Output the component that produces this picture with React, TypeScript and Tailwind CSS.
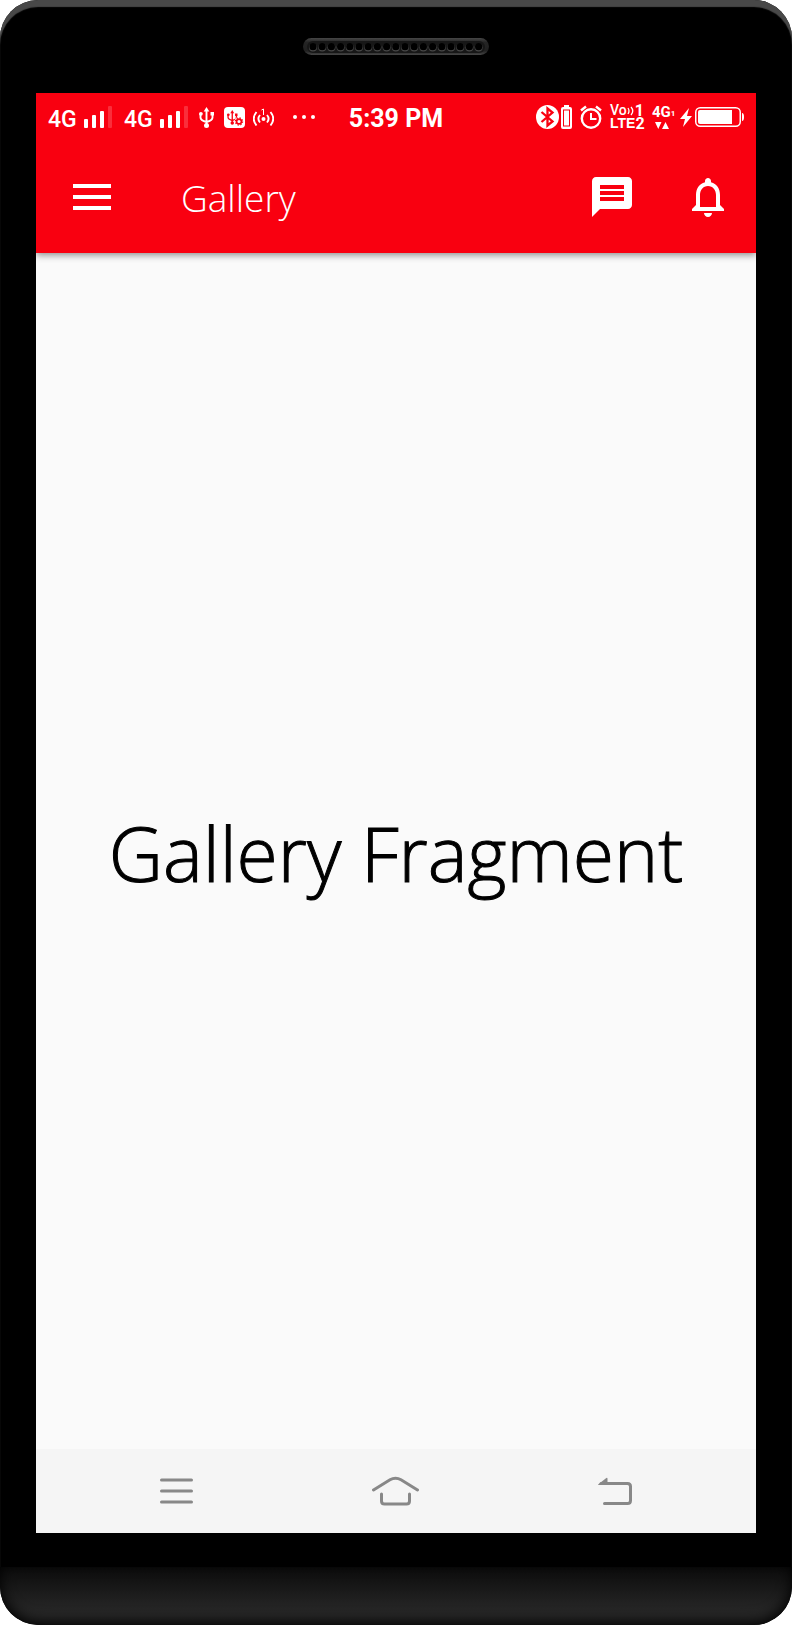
import { MdMessage, MdNotificationsNone } from "react-icons/md";

function SignalStrength() {
  return (
    <div className="flex items-end gap-2">
      <span className="h-[18px] w-7 text-[23px] leading-[20px] font-medium">4G</span>
      <svg width="28" height="22" viewBox="0 0 28 22" fill="#fff" aria-hidden="true">
        <rect x="0" y="13" width="4" height="9" rx="1" />
        <rect x="8" y="9" width="4" height="13" rx="1" />
        <rect x="16" y="5" width="4" height="17" rx="1" />
        <rect x="24" y="0" width="4" height="22" rx="1" opacity="0.18" />
      </svg>
    </div>
  );
}

function UsbPaths() {
  return (
    <>
      <path d="M7.500 3v15M1.500 7v3.500q0 3 6 4.500 6-1.500 6-4.500V7" fill="none" stroke="currentColor" strokeWidth="1.900" />
      <path d="M7.500 0l2.800 4.500H4.700z" fill="currentColor" />
      <circle cx="7.500" cy="18.500" r="2.500" fill="currentColor" />
      <circle cx="1.900" cy="6.800" r="1.900" fill="currentColor" />
      <rect x="11.500" y="5" width="3.500" height="3.500" fill="currentColor" />
    </>
  );
}

function StatusBar() {
  return (
    <div className="grid h-12 grid-cols-[1fr_auto_1fr] items-center px-3">
      <div className="flex items-center">
        <div className="flex gap-3">
          <SignalStrength />
          <SignalStrength />
        </div>
        <svg className="ml-[11px]" width="15" height="21" viewBox="0 0 15 21" aria-hidden="true">
          <UsbPaths />
        </svg>
        <svg className="ml-[10px]" width="21" height="21" viewBox="0 0 21 21" aria-hidden="true">
          <rect width="21" height="21" rx="4" fill="#fff" />
          <g className="text-[#f90010]" transform="translate(3 3) scale(.7)">
            <UsbPaths />
          </g>
          <circle cx="15" cy="14.500" r="4.600" fill="#fff" />
          <circle cx="15" cy="14.500" r="2.400" fill="none" stroke="#f90010" strokeWidth="1.600" />
          <circle cx="15" cy="14.500" r="3.600" fill="none" stroke="#f90010" strokeWidth="1.200" strokeDasharray="1.400 1.430" />
        </svg>
        <svg className="ml-2" width="21" height="21" viewBox="0 0 21 21" fill="none" stroke="#fff" strokeWidth="1.900" aria-hidden="true">
          <path d="M3.500 5q-5.500 6.700 0 13.500M7 8q-3.200 3.800 0 7.500M17.500 5q5.500 6.700 0 13.500M14 8q3.200 3.800 0 7.500" />
          <circle cx="10.500" cy="12" r="2" fill="#fff" stroke="none" />
          <path d="M8.500 3l2-1v6" strokeWidth="1" />
        </svg>
        <svg className="ml-[19px]" width="22" height="4" viewBox="0 0 22 4" fill="#fff" aria-hidden="true">
          <circle cx="2" cy="2" r="2" />
          <circle cx="11" cy="2" r="2" />
          <circle cx="20" cy="2" r="2" />
        </svg>
      </div>

      <time className="pt-1 text-[25px] leading-6 font-bold">5:39 PM</time>

      <div className="flex items-center justify-end gap-2">
        <div className="flex gap-0.5">
          <svg width="23" height="24" viewBox="0 0 23 24" aria-hidden="true">
            <ellipse cx="11.500" cy="12" rx="11.500" ry="12" fill="#fff" />
            <path d="M5.500 7l11 9.500-5 4V3.500l5 4-11 9.500" fill="none" stroke="#f90010" strokeWidth="2.300" />
          </svg>
          <svg width="11" height="24" viewBox="0 0 11 24" aria-hidden="true">
            <path d="M3 0h5v2h1q2 0 2 2v18q0 2-2 2H2q-2 0-2-2V4q0-2 2-2h1z" fill="#fff" />
            <rect x="2.500" y="5" width="6" height="16" fill="#fff" stroke="#f90010" />
          </svg>
        </div>
        <svg width="22" height="24" viewBox="0 0 22 24" fill="none" stroke="#fff" strokeWidth="2.400" aria-hidden="true">
          <circle cx="11" cy="13.500" r="9.200" />
          <path d="M11 8v6h5.500" strokeWidth="2" />
          <path d="M1 5.500L6 1.500M16 1.500l5 4" />
        </svg>
        <div className="flex w-[34px] flex-col font-['Liberation_Sans',sans-serif] font-bold">
          <div className="flex items-center justify-between leading-[13px]">
            <span className="font-[Roboto,sans-serif] text-[14px] font-medium">Vo</span>
            <svg width="8" height="10" viewBox="0 0 8 10" fill="none" stroke="#fff" strokeWidth="1.300" aria-hidden="true">
              <path d="M1 2q2 3 0 6M4 1q3.500 4 0 8" />
            </svg>
            <span className="font-[Roboto,sans-serif] text-[16px]">1</span>
          </div>
          <div className="flex items-center justify-between leading-[13px]">
            <span className="text-[14px]">LTE</span>
            <span className="font-[Roboto,sans-serif] text-[16px]">2</span>
          </div>
        </div>
        <div className="flex w-5 flex-col items-start gap-1">
          <div className="flex items-end leading-3 font-bold">
            <span className="text-[15px]">4G</span>
            <span className="text-[8px] leading-2">1</span>
          </div>
          <svg className="ml-[3px]" width="14" height="7" viewBox="0 0 14 7" fill="#fff" aria-hidden="true">
            <path d="M0 0h6.500L3.250 7zM7 7h7L10.500 0z" />
          </svg>
        </div>
        <div className="flex items-center gap-[3px]">
          <svg width="12" height="19" viewBox="0 0 12 19" fill="#fff" aria-hidden="true">
            <path d="M9 0L0 11h5L3 19l9-11H7z" />
          </svg>
          <svg width="49" height="20" viewBox="0 0 49 20" aria-hidden="true">
            <rect x=".75" y=".75" width="44.500" height="18.500" rx="4.500" fill="none" stroke="#fff" strokeWidth="1.500" />
            <path d="M5 3h32v14H5q-2 0-2-2V5q0-2 2-2z" fill="#fff" />
            <path d="M47 6q2 0 2 4t-2 4z" fill="#fff" />
          </svg>
        </div>
      </div>
    </div>
  );
}

function Toolbar() {
  return (
    <div className="flex h-28 items-center pr-6 pl-[37px]">
      <button type="button" aria-label="Open navigation menu">
        <svg width="38" height="26" viewBox="0 0 38 26" fill="#fff" aria-hidden="true">
          <path d="M0 0h38v4H0zM0 11h38v4H0zM0 22h38v4H0z" />
        </svg>
      </button>
      <h1 className="ml-[70px] pt-0.5 font-['Open_Sans',sans-serif] text-[37px] leading-[48px] font-light">Gallery</h1>
      <div className="ml-auto flex gap-12">
        <button type="button" aria-label="Messages">
          <MdMessage size={48} />
        </button>
        <button type="button" aria-label="Notifications">
          <MdNotificationsNone size={48} />
        </button>
      </div>
    </div>
  );
}

function NavigationBar() {
  return (
    <nav className="flex h-21 items-center justify-between bg-[#f5f5f5] px-[124px] text-[#888]">
      <button type="button" aria-label="Recent apps">
        <svg width="33" height="26" viewBox="0 0 33 26" fill="none" stroke="currentColor" strokeWidth="3" strokeLinecap="round" aria-hidden="true">
          <path d="M1.500 2h30M1.500 13h30M1.500 24h30" />
        </svg>
      </button>
      <button type="button" aria-label="Home">
        <svg width="47" height="30" viewBox="0 0 47 30" fill="none" stroke="currentColor" strokeWidth="3" strokeLinecap="round" aria-hidden="true">
          <path d="M1.500 14L18 3.800Q23.500 0.500 29 3.800L45.500 14" />
          <path d="M9.500 18v7q0 3 3 3h22q3 0 3-3v-7" />
        </svg>
      </button>
      <button type="button" aria-label="Back">
        <svg width="34" height="28" viewBox="0 0 34 28" fill="none" stroke="currentColor" strokeWidth="3" strokeLinecap="round" aria-hidden="true">
          <path d="M3 6.500h26.500q3 0 3 3v14q0 3-3 3H6.500" />
          <path d="M0 7.500L8 1.200Q9.500 0 9.500 2v6H.5z" fill="currentColor" stroke="none" />
        </svg>
      </button>
    </nav>
  );
}

function Speaker() {
  const holes = Array.from({ length: 19 }, (_, i) => 10 + i * 9.2);
  return (
    <svg width="186" height="17" viewBox="0 0 186 17" aria-hidden="true">
      <defs>
        <linearGradient id="rim" x2="0" y2="1">
          <stop stopColor="#464646" />
          <stop offset=".25" stopColor="#252525" />
          <stop offset=".75" stopColor="#202020" />
          <stop offset="1" stopColor="#464646" />
        </linearGradient>
      </defs>
      <rect width="186" height="17" rx="8.500" fill="url(#rim)" />
      <rect x="4" y="3" width="178" height="12" rx="6" fill="#171717" />
      {holes.map((x) => (
        <g key={x}>
          <circle cx={x} cy="9.500" r="4" fill="#484848" />
          <circle cx={x} cy="8.700" r="3.600" fill="#000" />
        </g>
      ))}
    </svg>
  );
}

export default function App() {
  return (
    <div className="min-h-screen bg-white font-[Roboto,sans-serif]">
      <div className="flex min-h-screen flex-col overflow-hidden rounded-[38px] bg-black shadow-[inset_0_7px_1px_#484848]">
        <div className="flex h-[93px] shrink-0 justify-center pt-[38px]">
          <Speaker />
        </div>
        <div className="mx-9 flex flex-1 flex-col overflow-hidden bg-[#fafafa]">
          <header className="bg-[#f90010] text-white shadow-[0_2px_7px_rgba(0,0,0,0.45)]">
            <StatusBar />
            <Toolbar />
          </header>
          <main className="flex flex-1 items-center justify-center pt-1">
            <p className="font-['Open_Sans',sans-serif] text-[75px] leading-[112px] font-light text-black [-webkit-text-stroke:1px_#000]">Gallery Fragment</p>
          </main>
          <NavigationBar />
        </div>
        <div className="mt-[34px] h-[58px] shrink-0 rounded-b-[38px] bg-linear-to-b from-[#0c0c0c] to-[#303030] shadow-[inset_0_-4px_14px_#000]" />
      </div>
    </div>
  );
}
